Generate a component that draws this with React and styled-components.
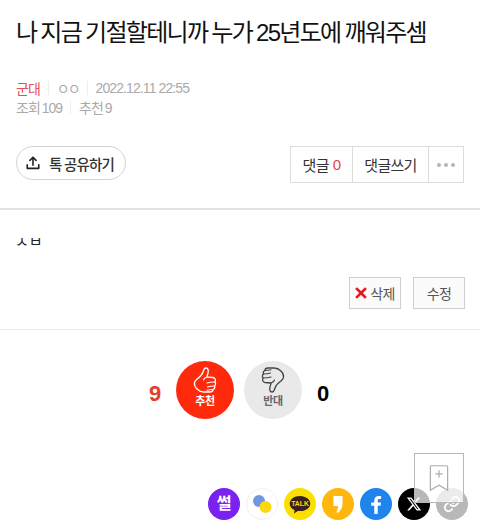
import React from "react";
import styled, { createGlobalStyle } from "styled-components";

const Global = createGlobalStyle`
  html, body { margin: 0; padding: 0; background: #fff; }
  body { font-family: "Liberation Sans", "Noto Sans CJK KR", sans-serif; }
`;

const Page = styled.div`
  position: relative;
  width: 480px;
  height: 532px;
  overflow: hidden;
  background: #fff;
`;

const Header = styled.header`
  padding: 15px 16px 0;
  box-sizing: border-box;
  border-bottom: 2px solid #e2e2e2;
  height: 210px;
`;

const Title = styled.h1`
  margin: 0;
  font-size: 24px;
  line-height: 36px;
  font-weight: 400;
  letter-spacing: -1.7px;
  word-spacing: -1px;
  color: #111;
  white-space: nowrap;
`;

const MetaRow = styled.div`
  display: flex;
  align-items: center;
  height: 19px;
  font-size: 14px;
  letter-spacing: -1px;
  word-spacing: -1px;
  color: #aaa;
  white-space: nowrap;
`;

const MetaFirst = styled(MetaRow)`
  margin-top: 27px;
`;

const Board = styled.span`
  color: #e5505a;
`;

const Nick = styled.span`
  letter-spacing: -2px;
`;

const Stamp = styled.span`
  letter-spacing: -0.9px;
  word-spacing: 0;
`;

const Sep = styled.i`
  width: 1px;
  height: 14px;
  margin: 0 8px;
  background: #eee;
`;

const Actions = styled.div`
  display: flex;
  justify-content: space-between;
  align-items: flex-start;
  margin-top: 30px;
`;

const SharePill = styled.button`
  display: flex;
  align-items: center;
  gap: 8px;
  width: 110px;
  height: 34px;
  padding: 0 0 0 8px;
  box-sizing: border-box;
  border: 1px solid #d4d4d4;
  border-radius: 17px;
  background: #fff;
  font: 500 14.5px "Noto Sans CJK KR", sans-serif;
  letter-spacing: -0.8px;
  color: #333;
`;

const CommentGroup = styled.div`
  display: flex;
  height: 37px;
  box-sizing: border-box;
  border: 1px solid #dcdcdc;
`;

const CommentBtn = styled.div`
  display: flex;
  align-items: center;
  justify-content: center;
  box-sizing: border-box;
  width: ${(p) => p.$w}px;
  font-size: 15px;
  letter-spacing: -0.7px;
  color: #333;
  background: #fff;
  & + & {
    border-left: 1px solid #dcdcdc;
  }
`;

const Red = styled.span`
  color: #e5404f;
  margin-left: 4px;
`;

const Dots = styled.span`
  display: flex;
  gap: 3px;
  & > i {
    width: 4px;
    height: 4px;
    border-radius: 50%;
    background: #b5b5b5;
  }
`;

const Body = styled.section`
  height: 120px;
  box-sizing: border-box;
  border-bottom: 1px solid #ececec;
  padding: 28px 15px 0;
`;

const ContentClip = styled.div`
  height: 19px;
  overflow: hidden;
`;

const ContentText = styled.p`
  margin: -7px 0 0;
  font-size: 15px;
  line-height: 22px;
  color: #222;
`;

const Tools = styled.div`
  display: flex;
  justify-content: flex-end;
  gap: 12px;
  margin-top: 20px;
`;

const ToolBtn = styled.div`
  display: flex;
  align-items: center;
  justify-content: center;
  gap: 3px;
  width: 52px;
  height: 32px;
  box-sizing: border-box;
  border: 1px solid #cfcfcf;
  background: #fbfbfb;
  font-size: 14px;
  letter-spacing: -0.6px;
  color: #555;
`;

const Vote = styled.section`
  display: flex;
  justify-content: center;
  align-items: center;
  height: 119px;
  padding-right: 2px;
`;

const Count = styled.strong`
  width: 32px;
  margin-top: 8px;
  font: 700 22px "Liberation Sans", sans-serif;
  text-align: center;
  color: ${(p) => p.$c};
`;

const VoteBtn = styled.div`
  display: flex;
  flex-direction: column;
  align-items: center;
  width: 58px;
  height: 58px;
  margin: 0 5px;
  padding-top: 6px;
  box-sizing: border-box;
  border-radius: 50%;
  background: ${(p) => p.$bg};
  color: ${(p) => p.$fg};
`;

const VoteLabel = styled.span`
  font-size: 11px;
  line-height: 13px;
  font-weight: 700;
  letter-spacing: -0.4px;
  margin-top: 2px;
`;

const Sns = styled.div`
  display: flex;
  justify-content: flex-end;
  gap: 6px;
  padding-right: 12px;
  margin-top: 39px;
`;

const SnsIcon = styled.div`
  display: flex;
  align-items: center;
  justify-content: center;
  width: 32px;
  height: 32px;
  box-sizing: border-box;
  border-radius: 50%;
  background: ${(p) => p.$bg};
  border: ${(p) => (p.$line ? "1px solid #f0f0f0" : "0")};
`;

const SsulText = styled.span`
  font-size: 16px;
  font-weight: 700;
  color: #fff;
  line-height: 1;
`;

const Bookmark = styled.div`
  position: absolute;
  left: 414px;
  top: 453px;
  width: 50px;
  height: 50px;
  display: flex;
  align-items: center;
  justify-content: center;
  box-sizing: border-box;
  border: 1px solid #b8b8b8;
  background: rgba(255, 255, 255, 0.72);
`;

const Thumb = ({ color, flip }) => (
  <svg width="24" height="26" viewBox="0 0 24 26" fill="none" stroke={color} strokeWidth="1.3" strokeLinejoin="round" strokeLinecap="round" style={flip ? { transform: "rotate(180deg)" } : undefined}>
    <path d="M4 12C7 10 9 8 10 5c.5-2 1-4 3-4 2.500 0 2.500 3 2 5-.5 2-1 3-1 4l6 .5c2.500.5 3 3 1.800 4.500 1.200 1 1 3-.3 4 .5 1.500 0 3-1.500 3.500 0 1.500-1 2.500-3 2.500h-6c-3 0-5-1-7-3-2-2-3-4-2.500-6.500C2 14 3 13 4 12z" />
    <path d="M14 10c-1.500.5-3 1.500-3.500 3M21.500 15c-2.500 0-5 .2-7.500 1M21.500 19c-2.500 0-5 .2-7 1M20 22.500c-2 0-4 .2-6 .8" strokeWidth="1.100" />
  </svg>
);

export default function App() {
  return (
    <Page>
      <Global />
      <Header>
        <Title>나 지금 기절할테니까 누가 25년도에 깨워주셈</Title>
        <MetaFirst>
          <Board>군대</Board>
          <Sep />
          <Nick>ㅇㅇ</Nick>
          <Sep />
          <Stamp>2022.12.11 22:55</Stamp>
        </MetaFirst>
        <MetaRow>
          <span>조회 109</span>
          <Sep />
          <span>추천 9</span>
        </MetaRow>
        <Actions>
          <SharePill>
            <svg width="16" height="16" viewBox="0 0 18 18" fill="none" stroke="#222" strokeWidth="1.800" strokeLinecap="round" strokeLinejoin="round">
              <path d="M9 11.500V2.500M5.500 6 9 2.500 12.500 6" />
              <path d="M2.500 11v4h13v-4" />
            </svg>
            톡 공유하기
          </SharePill>
          <CommentGroup>
            <CommentBtn $w={61}>댓글<Red>0</Red></CommentBtn>
            <CommentBtn $w={76}>댓글쓰기</CommentBtn>
            <CommentBtn $w={35}><Dots><i /><i /><i /></Dots></CommentBtn>
          </CommentGroup>
        </Actions>
      </Header>
      <Body>
        <ContentClip>
          <ContentText>ㅅㅂ</ContentText>
        </ContentClip>
        <Tools>
          <ToolBtn>
            <svg width="12" height="12" viewBox="0 0 12 12" stroke="#e01a1a" strokeWidth="2.600" strokeLinecap="square">
              <path d="M2 2l8 8M10 2l-8 8" />
            </svg>
            삭제
          </ToolBtn>
          <ToolBtn>수정</ToolBtn>
        </Tools>
      </Body>
      <Vote>
        <Count $c="#e2402a">9</Count>
        <VoteBtn $bg="#ff2a0c" $fg="#fff">
          <Thumb color="#fff" />
          <VoteLabel>추천</VoteLabel>
        </VoteBtn>
        <VoteBtn $bg="#e9e9e9" $fg="#666">
          <Thumb color="#444" flip />
          <VoteLabel>반대</VoteLabel>
        </VoteBtn>
        <Count $c="#000">0</Count>
      </Vote>
      <Sns>
        <SnsIcon $bg="#7a22f0"><SsulText>썰</SsulText></SnsIcon>
        <SnsIcon $bg="#fff" $line>
          <svg width="24" height="24" viewBox="0 0 24 24">
            <circle cx="9" cy="9" r="6" fill="#7396e0" />
            <circle cx="15.500" cy="15" r="6" fill="#fcd80f" />
          </svg>
        </SnsIcon>
        <SnsIcon $bg="#fbdf00">
          <svg width="24" height="21" viewBox="0 0 28 24">
            <path d="M14 2C7 2 2 6 2 11c0 3.400 2.300 6 5.600 7.500L7 22.500l4.500-3c.8.100 1.700.2 2.500.2 7 0 12-4 12-8.700S21 2 14 2z" fill="#3c1e1e" />
            <text x="14" y="14" textAnchor="middle" fontSize="8" fontWeight="700" fontFamily="Liberation Sans" fill="#fbdf00">TALK</text>
          </svg>
        </SnsIcon>
        <SnsIcon $bg="#ffb70f">
          <svg width="10" height="17" viewBox="0 0 10 17">
            <path d="M.5 0h9v8c0 4-2 7-5 9l-1-1c1-2 1.500-4 1.500-6H.5z" fill="#fff" />
          </svg>
        </SnsIcon>
        <SnsIcon $bg="#1f84ec">
          <svg width="12" height="19" viewBox="0 0 14 22">
            <path d="M9 22v-9.500h3.300l.5-3.700H9V6.500c0-1.100.4-1.800 1.900-1.800H13V1.300C12.600 1.200 11.400 1 10 1 7 1 5 2.800 5 6.100v2.700H1.500v3.700H5V22z" fill="#fff" />
          </svg>
        </SnsIcon>
        <SnsIcon $bg="#000">
          <svg width="16" height="16" viewBox="0 0 24 24">
            <path d="M18.200 2.200h3.300l-7.200 8.300 8.500 11.200h-6.700l-5.200-6.800-6 6.800H1.700l7.700-8.800L1.300 2.200H8.100l4.700 6.200zM17 19.800h1.800L7.100 4.100H5.100z" fill="#fff" />
          </svg>
        </SnsIcon>
        <SnsIcon $bg="#b8b8b8">
          <svg width="18" height="18" viewBox="0 0 24 24" fill="none" stroke="#fff" strokeWidth="2.400" strokeLinecap="round" strokeLinejoin="round">
            <path d="M10 13a5 5 0 0 0 7.500.5l3-3a5 5 0 0 0-7-7l-1.700 1.700" />
            <path d="M14 11a5 5 0 0 0-7.500-.5l-3 3a5 5 0 0 0 7 7l1.700-1.700" />
          </svg>
        </SnsIcon>
      </Sns>
      <Bookmark>
        <svg width="20" height="28" viewBox="0 0 22 30" fill="none" stroke="#aaa" strokeWidth="1.300">
          <path d="M2.500 1.500h17a1 1 0 0 1 1 1v26L11 23 1.500 28.500v-26a1 1 0 0 1 1-1z" />
          <path d="M11 6.500v8M7 10.500h8" />
        </svg>
      </Bookmark>
    </Page>
  );
}
